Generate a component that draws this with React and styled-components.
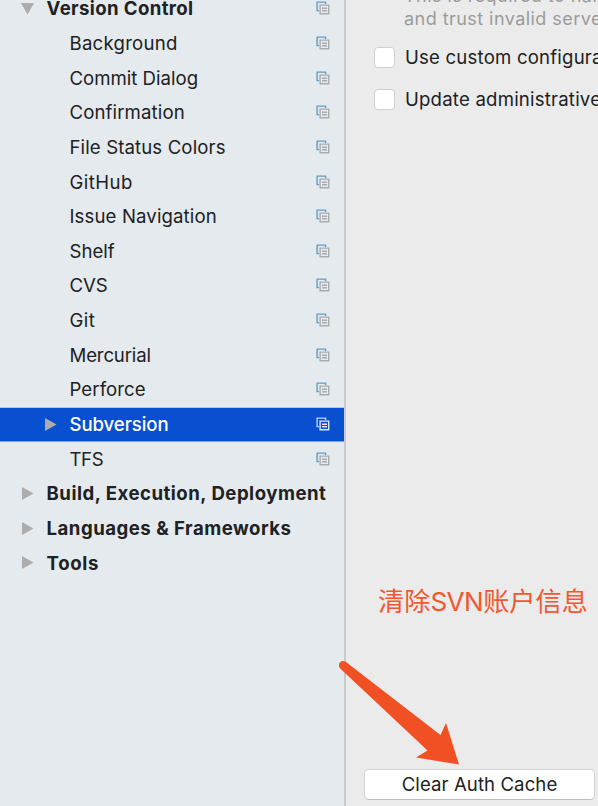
import React from "react";
import styled, { createGlobalStyle, css } from "styled-components";

const GlobalStyle = createGlobalStyle`
  * { box-sizing: border-box; }
  body { margin: 0; overflow: hidden; }
`;

const Window = styled.main`
  position: relative;
  display: flex;
  width: 598px;
  height: 806px;
  overflow: hidden;
  background: #ebebeb;
  color: #202122;
  font-family: Inter, "Noto Sans CJK SC", sans-serif;
  font-size: 18.6px;
  white-space: nowrap;
`;

const Sidebar = styled.nav`
  flex: 0 0 346px;
  overflow: hidden;
  background: #e5eaee;
  border-right: 2px solid #c9cacc;
`;

const Tree = styled.ul`
  margin: -9.1px 0 0;
  padding: 0;
  list-style: none;
`;

const Row = styled.li`
  display: flex;
  align-items: center;
  height: 34.67px;
  padding: 0 14px 0 ${(p) => (p.$group ? 21 : 44)}px;
  letter-spacing: ${(p) => p.$spacing}px;
  ${(p) => p.$group && css`font-weight: 700;`}
  ${(p) => p.$selected && css`
    background: #0950d0;
    box-shadow: inset 0 1px 0 #b4c7ea, 0 1px 0 #7da1e2;
    color: #fff;
    font-weight: 500;
  `}
`;

const Toggle = styled.svg`
  flex: none;
  width: 13px;
  height: 13px;
  margin-right: 12.5px;
  fill: #adadad;
`;

const Label = styled.span`
  flex: 1;
`;

const ScopeSvg = styled.svg`
  flex: none;
  width: 14px;
  height: 14px;
  fill: none;
  stroke-width: 1.4;
`;

const Settings = styled.section`
  display: flex;
  flex: 1;
  flex-direction: column;
  min-width: 0;
  padding-left: 18px;
`;

const Hint = styled.p`
  height: 30px;
  margin: 0 0 16px 40px;
  display: flex;
  flex-direction: column;
  justify-content: flex-end;
  color: #9b9b9b;
  font-size: 18px;
  line-height: 23px;
  letter-spacing: 0.45px;
`;

const Option = styled.label`
  display: flex;
  align-items: center;
  height: 22px;
  margin-bottom: 20px;
  padding-left: 10px;
  letter-spacing: ${(p) => p.$spacing}px;
`;

const Checkbox = styled.span`
  flex: none;
  width: 21px;
  height: 21px;
  margin-right: 10px;
  border: 1px solid #cfcfcf;
  border-radius: 4px;
  background: #fff;
`;

const Note = styled.p`
  margin: auto 0 0 14px;
  height: 36px;
  color: #f1582f;
  font-size: 26.2px;
  line-height: 36px;
`;

const Latin = styled.span`
  letter-spacing: -0.6px;
`;

const ClearButton = styled.button`
  flex: none;
  width: 231px;
  height: 31px;
  margin: 149px 0 6px;
  padding: 0 0 2px;
  border: 1px solid #d2d2d2;
  border-bottom-color: #bdbdbd;
  border-radius: 5px;
  background: #fff;
  color: #202122;
  font: inherit;
  letter-spacing: 0.08px;
`;

const Arrow = styled.svg`
  position: absolute;
  left: 336px;
  top: 658px;
  width: 126px;
  height: 110px;
  fill: #f15025;
`;

const items = [
  { label: "Version Control", group: true, arrow: "down", icon: true, spacing: 0.38 },
  { label: "Background", icon: true, spacing: 0.25 },
  { label: "Commit Dialog", icon: true, spacing: 0 },
  { label: "Confirmation", icon: true, spacing: 0.12 },
  { label: "File Status Colors", icon: true, spacing: 0.12 },
  { label: "GitHub", icon: true, spacing: 0.45 },
  { label: "Issue Navigation", icon: true, spacing: 0.12 },
  { label: "Shelf", icon: true, spacing: 0 },
  { label: "CVS", icon: true, spacing: -0.1 },
  { label: "Git", icon: true, spacing: 0.4 },
  { label: "Mercurial", icon: true, spacing: -0.15 },
  { label: "Perforce", icon: true, spacing: 0.08 },
  { label: "Subversion", arrow: "right", icon: true, selected: true, spacing: -0.08 },
  { label: "TFS", icon: true, spacing: -0.4 },
  { label: "Build, Execution, Deployment", group: true, arrow: "right", spacing: 0.5 },
  { label: "Languages & Frameworks", group: true, arrow: "right", spacing: 0.5 },
  { label: "Tools", group: true, arrow: "right", spacing: 0.7 },
];

function ScopeIcon({ selected }) {
  const back = selected ? "#b9d0f5" : "#5e9fc2";
  const front = selected ? "#dce4f2" : "#a9abad";
  return (
    <ScopeSvg viewBox="0 0 14 14">
      <path d="M3 9.6H1.1V1.1H9.6V3" stroke={back} />
      <path d="M4.1 4.1H12.7V12.7H4.1Z M6 7.2H11 M6 9.8H11" stroke={front} />
    </ScopeSvg>
  );
}

export default function App() {
  return (
    <>
      <GlobalStyle />
      <Window>
        <Sidebar>
          <Tree>
            {items.map((item) => (
              <Row key={item.label} $group={item.group} $selected={item.selected} $spacing={item.spacing}>
                <Toggle viewBox="0 0 13 13">
                  {item.arrow === "down" && <path d="M0 1H13L6.5 12.5Z" />}
                  {item.arrow === "right" && <path d="M1 0V13L12.5 6.5Z" />}
                </Toggle>
                <Label>{item.label}</Label>
                {item.icon && <ScopeIcon selected={item.selected} />}
              </Row>
            ))}
          </Tree>
        </Sidebar>
        <Settings>
          <Hint>
            <span>This is required to handle</span>
            <span>and trust invalid server certificates</span>
          </Hint>
          <Option $spacing={0.2}><Checkbox />Use custom configuration directory</Option>
          <Option $spacing={0.2}><Checkbox />Update administrative information</Option>
          <Note>清除<Latin>SVN</Latin>账户信息</Note>
          <ClearButton>Clear Auth Cache</ClearButton>
        </Settings>
        <Arrow viewBox="336 658 126 110">
          <path d="M346 662L440.5 735L446 723L459 764.5L416 757.5L427.5 750.5L340.2 668.5C336.5 664 341.5 658.7 346 662Z" />
        </Arrow>
      </Window>
    </>
  );
}
